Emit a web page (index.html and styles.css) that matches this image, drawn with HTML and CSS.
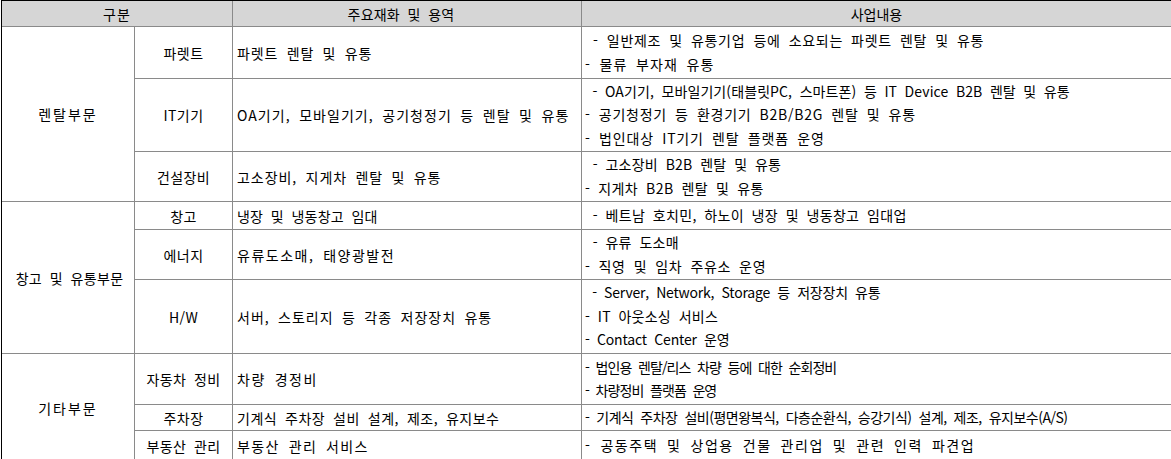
FILE: index.html
```html
<!DOCTYPE html>
<html lang="ko">
<head>
<meta charset="utf-8">
<title>사업내용</title>
<link rel="stylesheet" href="styles.css">
</head>
<body>
<div class="biz-table">
  <div class="cell head span-2 h-gubun">구분</div>
  <div class="cell head h-item">주요재화 및 용역</div>
  <div class="cell head h-desc">사업내용</div>

  <div class="cell div-name rows-rental d-wide">렌탈부문</div>
  <div class="cell sub s-n">파렛트</div>
  <div class="cell item i-09">파렛트 렌탈 및 유통</div>
  <div class="cell desc">
    <div class="line l-07"> - 일반제조 및 유통기업 등에 소요되는 파렛트 렌탈 및 유통</div>
    <div class="line l-11">- 물류 부자재 유통</div>
  </div>

  <div class="cell sub s-n">IT기기</div>
  <div class="cell item i-105">OA기기, 모바일기기, 공기청정기 등 렌탈 및 유통</div>
  <div class="cell desc">
    <div class="line l-01"> - OA기기, 모바일기기(태블릿PC, 스마트폰) 등 IT Device B2B 렌탈 및 유통</div>
    <div class="line l-075">- 공기청정기 등 환경기기 B2B/B2G 렌탈 및 유통</div>
    <div class="line l-085">- 법인대상 IT기기 렌탈 플랫폼 운영</div>
  </div>

  <div class="cell sub s-n">건설장비</div>
  <div class="cell item i-095">고소장비, 지게차 렌탈 및 유통</div>
  <div class="cell desc">
    <div class="line l-025"> - 고소장비 B2B 렌탈 및 유통</div>
    <div class="line l-045">- 지게차 B2B 렌탈 및 유통</div>
  </div>

  <div class="cell div-name rows-storage d-narrow">창고 및 유통부문</div>
  <div class="cell sub s-n">창고</div>
  <div class="cell item i-02">냉장 및 냉동창고 임대</div>
  <div class="cell desc">
    <div class="line l-03"> - 베트남 호치민, 하노이 냉장 및 냉동창고 임대업</div>
  </div>

  <div class="cell sub s-n">에너지</div>
  <div class="cell item i-15">유류도소매, 태양광발전</div>
  <div class="cell desc">
    <div class="line l-025"> - 유류 도소매</div>
    <div class="line l-065">- 직영 및 임차 주유소 운영</div>
  </div>

  <div class="cell sub s-n">H/W</div>
  <div class="cell item i-10">서버, 스토리지 등 각종 저장장치 유통</div>
  <div class="cell desc">
    <div class="line l-m02"> - Server, Network, Storage 등 저장장치 유통</div>
    <div class="line l-025">- IT 아웃소싱 서비스</div>
    <div class="line l-m015">- Contact Center 운영</div>
  </div>

  <div class="cell div-name rows-etc d-wide">기타부문</div>
  <div class="cell sub s-n">자동차 정비</div>
  <div class="cell item i-15">차량 경정비</div>
  <div class="cell desc">
    <div class="line l-m09">- 법인용 렌탈/리스 차량 등에 대한 순회정비</div>
    <div class="line l-m09">- 차량정비 플랫폼 운영</div>
  </div>

  <div class="cell sub s-n">주차장</div>
  <div class="cell item i-05">기계식 주차장 설비 설계, 제조, 유지보수</div>
  <div class="cell desc">
    <div class="line l-m05">- 기계식 주차장 설비(평면왕복식, 다층순환식, 승강기식) 설계, 제조, 유지보수(A/S)</div>
  </div>

  <div class="cell sub s-n">부동산 관리</div>
  <div class="cell item i-14">부동산 관리 서비스</div>
  <div class="cell desc">
    <div class="line l-155">- 공동주택 및 상업용 건물 관리업 및 관련 인력 파견업</div>
  </div>
</div>
</body>
</html>
```

FILE: styles.css
```css
html, body {
  margin: 0;
  padding: 0;
  overflow: hidden;
  background: #ffffff;
}

body {
  font-family: "Noto Sans CJK KR", "Liberation Sans", sans-serif;
  font-size: 14px;
  color: #000000;
  word-spacing: 3.5px;
}

.biz-table {
  display: grid;
  grid-template-columns: 132px 97px 348px 589px;
  grid-template-rows: 25px 51px 72px 49px 27px 49px 73px 50px 25px 30px;
  gap: 1px;
  background: #8a8a8a;
  border-top: 1px solid #000000;
  border-left: 1px solid #000000;
  margin-left: 1px;
  width: max-content;
}

.cell {
  background: #ffffff;
  display: flex;
  align-items: center;
  white-space: pre;
  line-height: 16px;
}

.head {
  background: #d6d6d6;
  justify-content: center;
}

.h-gubun { letter-spacing: 1.2px; }
.h-item { letter-spacing: 0.2px; padding-right: 12px; }
.h-desc { letter-spacing: 0; }

.span-2 {
  grid-column: 1 / 3;
}

.div-name {
  grid-column: 1;
  justify-content: center;
}

.d-wide { letter-spacing: 2px; }
.d-narrow { letter-spacing: 0.3px; padding-left: 3px; }

.rows-rental { grid-row: 2 / 5; }
.rows-storage { grid-row: 5 / 8; }
.rows-etc { grid-row: 8 / 11; }

.sub {
  justify-content: center;
}

.s-n { letter-spacing: 0.4px; }

.item {
  padding-left: 4px;
}

.i-02 { letter-spacing: 0.2px; }
.i-05 { letter-spacing: 0.5px; }
.i-09 { letter-spacing: 0.9px; }
.i-095 { letter-spacing: 0.95px; }
.i-10 { letter-spacing: 1px; }
.i-105 { letter-spacing: 1.05px; }
.i-14 { letter-spacing: 1.4px; }
.i-15 { letter-spacing: 1.5px; }

.desc {
  flex-direction: column;
  align-items: flex-start;
  justify-content: center;
  padding-left: 3px;
}

.line {
  line-height: 23.5px;
  white-space: pre;
}

.l-m09 { letter-spacing: -0.9px; }
.l-m05 { letter-spacing: -0.5px; }
.l-m02 { letter-spacing: -0.2px; }
.l-m015 { letter-spacing: -0.15px; }
.l-01 { letter-spacing: 0.1px; }
.l-025 { letter-spacing: 0.25px; }
.l-03 { letter-spacing: 0.3px; }
.l-045 { letter-spacing: 0.45px; }
.l-065 { letter-spacing: 0.65px; }
.l-07 { letter-spacing: 0.7px; }
.l-075 { letter-spacing: 0.75px; }
.l-085 { letter-spacing: 0.85px; }
.l-11 { letter-spacing: 1.1px; }
.l-155 { letter-spacing: 1.55px; }
```
